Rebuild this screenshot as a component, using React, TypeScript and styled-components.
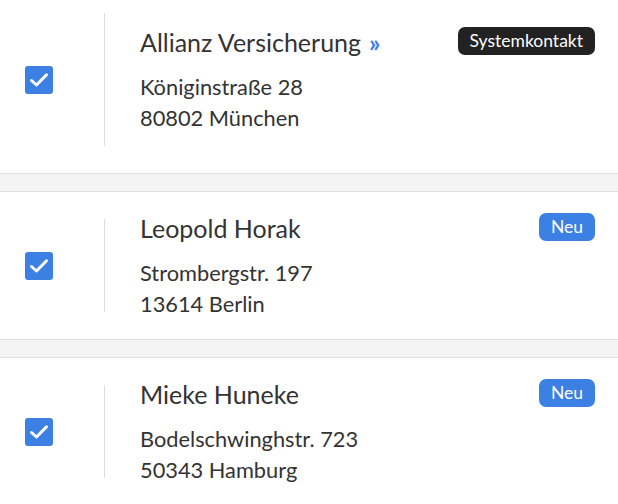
import styled, { createGlobalStyle } from 'styled-components';

const GlobalStyle = createGlobalStyle`
  html, body {
    margin: 0;
    padding: 0;
    background: #f4f4f4;
    font-family: Lato, "Noto Sans", sans-serif;
    color: #333;
  }
`;

const List = styled.div`
  display: flex;
  flex-direction: column;
  gap: 17px;
`;

const Card = styled.div<{ $first?: boolean }>`
  display: flex;
  align-items: center;
  background: #fff;
  border-top: ${(p) => (p.$first ? 'none' : '1px solid #e0e0e0')};
  border-bottom: 1px solid #e0e0e0;
  padding: ${(p) => (p.$first ? '13px' : '27px')} 23px 27px 0;
`;

const CheckCell = styled.div`
  width: 104px;
  display: flex;
  padding-left: 25px;
  box-sizing: border-box;
`;

const Check = styled.div`
  width: 28px;
  height: 28px;
  border-radius: 3px;
  background: #3d80e4;
  display: flex;
`;

const Content = styled.div<{ $tall?: boolean }>`
  flex: 1;
  height: 93px;
  border-left: 1px solid #dcdcdc;
  padding: ${(p) => (p.$tall ? '20px' : '0')} 0 ${(p) => (p.$tall ? '20px' : '0')} 35px;
  display: flex;
  align-items: flex-start;
`;

const Info = styled.div`
  flex: 1;
`;

const Name = styled.div`
  font-size: 25px;
  line-height: 30px;
  margin-top: -6px;
  margin-bottom: 14px;
  color: #333;
  white-space: nowrap;
`;

const More = styled.span`
  color: #3d80e4;
  font-weight: 700;
  margin-left: 8px;
`;

const Line = styled.div`
  font-size: 21.8px;
  line-height: 31px;
  color: #333;
  white-space: nowrap;
`;

const Badge = styled.div<{ $dark?: boolean }>`
  height: 28px;
  line-height: 28px;
  padding: 0 12px;
  border-radius: 7px;
  background: ${(p) => (p.$dark ? '#222' : '#3d80e4')};
  color: #fff;
  font-size: 17.5px;
  margin-top: -6px;
`;

const CheckIcon = () => (
  <svg width="28" height="28" viewBox="0 0 28 28">
    <path d="M6.5 14.5 L11.5 19 L21.5 8.8" fill="none" stroke="#fff" strokeWidth="3" strokeLinecap="round" strokeLinejoin="round" />
  </svg>
);

const contacts = [
  { name: 'Allianz Versicherung', street: 'Königinstraße 28', city: '80802 München', badge: 'Systemkontakt', system: true },
  { name: 'Leopold Horak', street: 'Strombergstr. 197', city: '13614 Berlin', badge: 'Neu' },
  { name: 'Mieke Huneke', street: 'Bodelschwinghstr. 723', city: '50343 Hamburg', badge: 'Neu' },
];

export default function App() {
  return (
    <>
      <GlobalStyle />
      <List>
        {contacts.map((c, i) => (
          <Card key={c.name} $first={i === 0}>
            <CheckCell>
              <Check>
                <CheckIcon />
              </Check>
            </CheckCell>
            <Content $tall={c.system}>
              <Info>
                <Name>
                  {c.name}
                  {c.system && <More>»</More>}
                </Name>
                <Line>{c.street}</Line>
                <Line>{c.city}</Line>
              </Info>
              <Badge $dark={c.system}>{c.badge}</Badge>
            </Content>
          </Card>
        ))}
      </List>
    </>
  );
}
